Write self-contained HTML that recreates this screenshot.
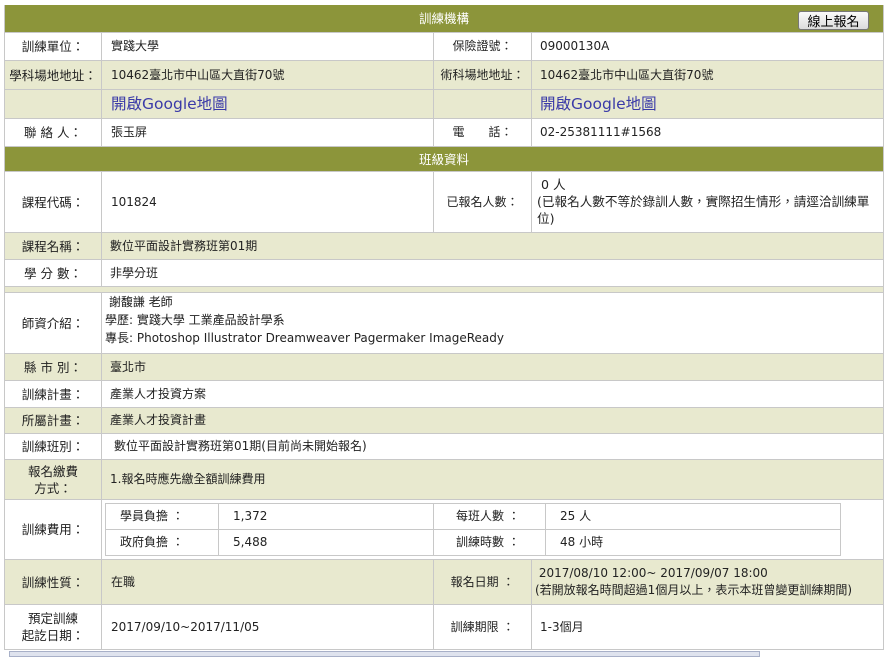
<!DOCTYPE html>
<html><head><meta charset="utf-8"><style>
*{box-sizing:border-box;margin:0;padding:0}
body{width:888px;height:655px;overflow:hidden;background:#fff;font-family:"DejaVu Sans","Noto Sans CJK TC",sans-serif;font-size:12px;color:#222}
.t{position:absolute;left:4px;width:880px;border-left:1px solid #c8c8c8;border-right:1px solid #c8c8c8}
.r{display:flex;border-bottom:1px solid #c8c8c8;width:100%}
.r>div{border-right:1px solid #c8c8c8;display:flex;align-items:center;line-height:17px}
.r>div:last-child{border-right:none}
.l{width:97px;justify-content:center;text-align:center;font-size:12.5px}
.v{width:332px;padding-left:9px}
.l2{width:98px;justify-content:center}
.v2{flex:1;padding-left:8px}
.b{background:#e8e9cf}
.h{background:#8c953a;color:#fff;justify-content:center;font-size:12.5px;position:relative}
.lnk{color:#3a3aa8;font-size:15.5px}
.btn{position:absolute;right:14px;top:6px;width:71px;height:19px;border:1px solid #777;border-radius:3px;background:linear-gradient(#fafafa,#dcdcdc);color:#000;font-size:13px;display:flex;align-items:center;justify-content:center}
.in{border-collapse:collapse;margin-left:3px}
.in td{border:1px solid #c8c8c8;height:26px;padding-left:14px}
</style></head><body>
<div class="t" style="top:5px">
<div class="r h" style="height:28px"><div style="width:100%;justify-content:center;border:none">訓練機構</div><span class="btn">線上報名</span></div>
<div class="r" style="height:28px"><div class="l">訓練單位：</div><div class="v">實踐大學</div><div class="l2">保險證號：</div><div class="v2">09000130A</div></div>
<div class="r b" style="height:29px"><div class="l">學科場地地址：</div><div class="v">10462臺北市中山區大直街70號</div><div class="l2">術科場地地址：</div><div class="v2">10462臺北市中山區大直街70號</div></div>
<div class="r b" style="height:29px"><div class="l"></div><div class="v"><span class="lnk">開啟Google地圖</span></div><div class="l2"></div><div class="v2"><span class="lnk">開啟Google地圖</span></div></div>
<div class="r" style="height:28px"><div class="l">聯 絡 人：</div><div class="v">張玉屏</div><div class="l2">電　　話：</div><div class="v2">02-25381111#1568</div></div>
<div class="r h" style="height:25px"><div style="width:100%;justify-content:center;border:none">班級資料</div></div>
<div class="r" style="height:61px"><div class="l">課程代碼：</div><div class="v">101824</div><div class="l2">已報名人數：</div><div class="v2" style="display:block;padding-top:4px;padding-left:5px;font-size:12.6px;padding-right:6px">&nbsp;0 人<br>(已報名人數不等於錄訓人數，實際招生情形，請逕洽訓練單位)</div></div>
<div class="r b" style="height:27px"><div class="l">課程名稱：</div><div class="v2">數位平面設計實務班第01期</div></div>
<div class="r" style="height:27px"><div class="l">學 分 數：</div><div class="v2">非學分班</div></div>
<div class="r b" style="height:6px"><div style="width:100%"></div></div>
<div class="r" style="height:61px"><div class="l">師資介紹：</div><div class="v2" style="display:block;padding-left:3px;line-height:18px">&nbsp;謝馥謙 老師<br>學歷: 實踐大學 工業產品設計學系<br>專長: Photoshop Illustrator Dreamweaver Pagermaker ImageReady</div></div>
<div class="r b" style="height:27px"><div class="l">縣 市 別：</div><div class="v2">臺北市</div></div>
<div class="r" style="height:27px"><div class="l">訓練計畫：</div><div class="v2">產業人才投資方案</div></div>
<div class="r b" style="height:26px"><div class="l">所屬計畫：</div><div class="v2">產業人才投資計畫</div></div>
<div class="r" style="height:26px"><div class="l">訓練班別：</div><div class="v2" style="padding-left:12px">數位平面設計實務班第01期(目前尚未開始報名)</div></div>
<div class="r b" style="height:40px"><div class="l">報名繳費<br>方式：</div><div class="v2">1.報名時應先繳全額訓練費用</div></div>
<div class="r" style="height:60px"><div class="l">訓練費用：</div><div class="v2" style="padding-left:0">
<table class="in"><tr><td style="width:113px">學員負擔 ：</td><td style="width:215px">1,372</td><td style="width:112px;padding-left:22px">每班人數 ：</td><td style="width:295px">25 人</td></tr>
<tr><td>政府負擔 ：</td><td>5,488</td><td style="padding-left:22px">訓練時數 ：</td><td>48 小時</td></tr></table></div></div>
<div class="r b" style="height:45px"><div class="l">訓練性質：</div><div class="v">在職</div><div class="l2">報名日期 ：</div><div class="v2" style="display:block;padding-top:5px;padding-left:3px">&nbsp;2017/08/10 12:00~ 2017/09/07 18:00<br>(若開放報名時間超過1個月以上，表示本班曾變更訓練期間)</div></div>
<div class="r" style="height:45px"><div class="l">預定訓練<br>起訖日期：</div><div class="v">2017/09/10~2017/11/05</div><div class="l2">訓練期限 ：</div><div class="v2">1-3個月</div></div>
</div>
<div style="position:absolute;left:9px;top:651px;width:751px;height:6px;border:1px solid #a8b0c8;background:#dfe3ee"></div>
</body></html>
